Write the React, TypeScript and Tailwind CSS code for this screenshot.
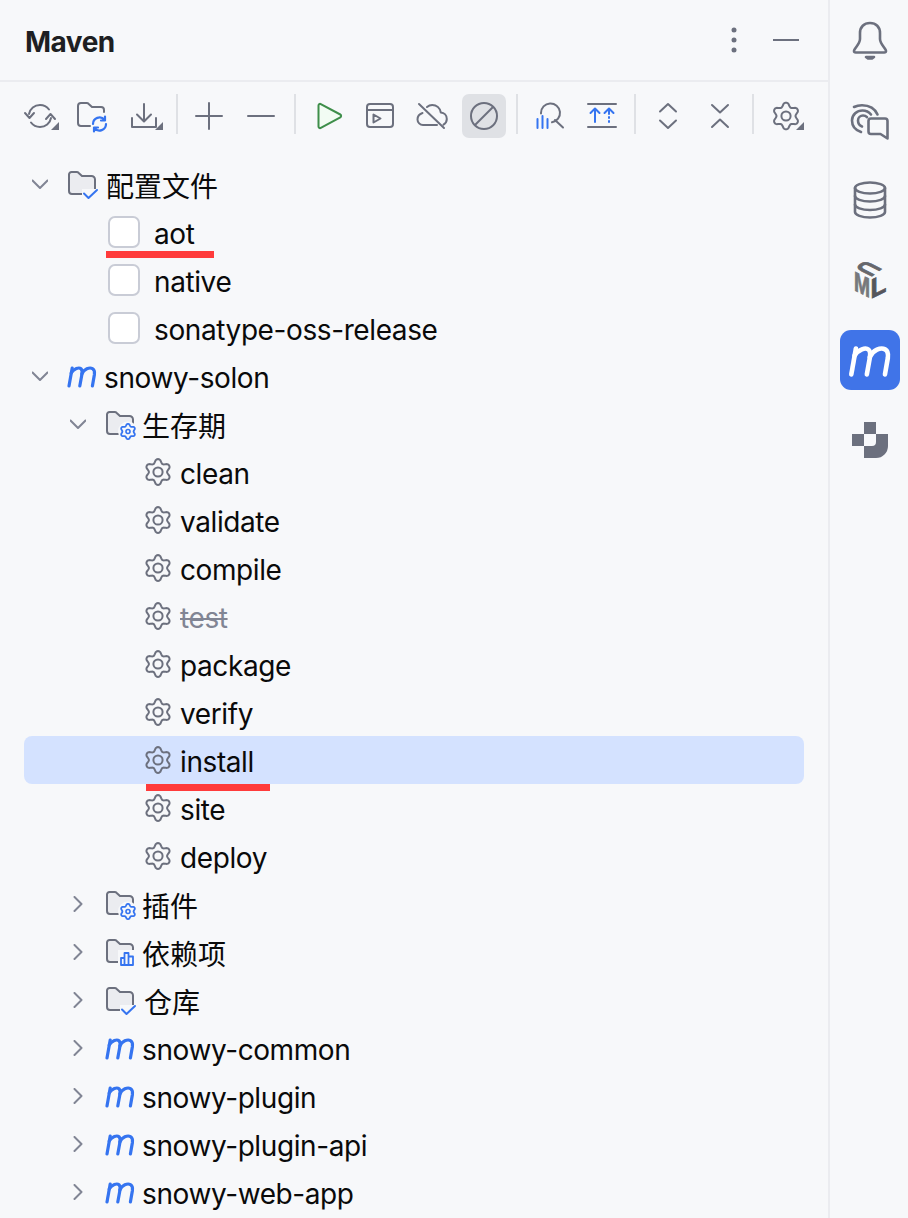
import React from "react";

const G = "#6C707E";
const B = "#3574F0";
const FONT = "font-['Inter','Noto_Sans_CJK_SC',sans-serif]";

function gearPath(cx: number, cy: number, a: number, b: number) {
  let d = "";
  for (let i = 0; i < 96; i++) {
    const t = (i / 96) * Math.PI * 2;
    const c = Math.cos(6 * t);
    const r = a + b * (c > 0 ? Math.pow(c, 0.7) : -Math.pow(-c, 0.9));
    const x = cx + r * Math.sin(t);
    const y = cy - r * Math.cos(t);
    d += (i ? "L" : "M") + x.toFixed(2) + " " + y.toFixed(2);
  }
  return d + "Z";
}

function S({ children, size = 32, vb }: { children: React.ReactNode; size?: number; vb?: string }) {
  return (
    <svg width={size} height={size} viewBox={vb ?? `0 0 ${size} ${size}`} fill="none" stroke={G} strokeWidth={2} strokeLinecap="round" strokeLinejoin="round" className="block shrink-0 overflow-visible">
      {children}
    </svg>
  );
}

const FOLDER = "M5.5 3h5.2c.8 0 1.5.3 2 .9L16 7h9.5a3.5 3.5 0 0 1 3.5 3.5V22a3 3 0 0 1-3 3H6a3 3 0 0 1-3-3V5.5A2.5 2.5 0 0 1 5.5 3z";

function Folder({ badge }: { badge: "check" | "gear" | "bars" }) {
  return (
    <S>
      <g transform="translate(0 1)">
        <path d={FOLDER} fill="#EBECF0" />
        {badge === "check" && (
          <>
            <path d="M16 20h16v10H16z" fill="#F7F8FA" stroke="none" />
            <path d="M18 24.500l4.500 4.500 8.500-8" stroke={B} strokeWidth={2} />
          </>
        )}
        {badge === "gear" && (
          <>
            <circle cx="24" cy="22.500" r="10" fill="#F7F8FA" stroke="none" />
            <path d={gearPath(24, 22.5, 6.6, 1)} stroke={B} strokeWidth={1.8} />
            <circle cx="24" cy="22.500" r="2" stroke={B} strokeWidth={1.6} />
          </>
        )}
        {badge === "bars" && (
          <>
            <path d="M14 13h18v17H14z" fill="#F7F8FA" stroke="none" />
            <path d="M17 21h3.500v7H17zM20.500 16h4v12h-4zM24.500 19.500H29V28h-4.500z" stroke={B} strokeWidth={1.8} />
          </>
        )}
      </g>
    </S>
  );
}

const MPATH = ["M3 26L6.200 8", "M5.200 13C8 8.500 13 7 15 8.800c1.500 1.400 1.200 3.800.9 5.600L13.800 26", "M15.800 14C18 9 23.500 7 26.500 8.600c2.400 1.300 2.200 4 1.900 6L26.400 26"];

function MLogo({ color = B, size = 32 }: { color?: string; size?: number }) {
  return (
    <svg width={size} height={size} viewBox="0 0 32 32" fill="none" stroke={color} strokeWidth={3.2} strokeLinecap="round" strokeLinejoin="round" className="block shrink-0">
      {MPATH.map((d) => (
        <path key={d} d={d} />
      ))}
    </svg>
  );
}

function LeafGear() {
  return (
    <S>
      <path d={gearPath(16, 16, 11, 1.9)} />
      <circle cx="16" cy="16" r="4.600" />
    </S>
  );
}

const Chev = ({ open }: { open: boolean }) => (
  <svg width="16" height="16" viewBox="0 0 16 16" fill="none" stroke="#818594" strokeWidth={2} strokeLinecap="round" strokeLinejoin="round" className="block shrink-0">
    {open ? <path d="M0.500 4.500L8 12l7.500-7.500" /> : <path d="M4.500 1L11.500 8l-7 7" />}
  </svg>
);

function Tool({ children, active }: { children: React.ReactNode; active?: boolean }) {
  return (
    <div className="w-[52px] h-11 flex items-center justify-center shrink-0">
      <div className={`w-11 h-11 rounded-[7px] flex items-center justify-center ${active ? "bg-[#DFE1E5]" : ""}`}>{children}</div>
    </div>
  );
}

function Sep({ w }: { w: string }) {
  return (
    <div className={`${w} h-10 flex justify-center shrink-0`}>
      <div className="w-0.5 h-10 bg-[#DFE1E5]" />
    </div>
  );
}

function Toolbar() {
  return (
    <div className="h-[68px] pt-3 pl-[14px] flex items-start">
      <Tool>
        <S>
          <path d="M5 14C6 8.500 10.500 5 16 5c4 0 7 1.800 9 4.500" />
          <path d="M27 18c-1 5.500-5.500 9-11 9-4 0-7-1.800-9-4.500" />
          <path d="M1 13l4.500 5 4.500-5M22 19l4.500-5 4.500 5" />
          <path d="M35 22v8h-8z" fill={G} stroke="none" />
        </S>
      </Tool>
      <Tool>
        <S>
          <path d="M14 26H5a3 3 0 0 1-3-3V6a3 3 0 0 1 3-3h5.700c.8 0 1.500.3 2 .9L16 7h9a3 3 0 0 1 3 3v2" />
          <path d="M17 24a6.500 6.500 0 0 1 11.500-4.200M29 16.500v4h-4M30 24a6.500 6.500 0 0 1-11.500 4.200M18 31.500v-4h4" stroke={B} strokeWidth={2.2} />
        </S>
      </Tool>
      <Tool>
        <S>
          <path d="M16 4v17M9 14.500l7 7 7-7M4 18v9h24v-9" />
          <path d="M35 22v8h-8z" fill={G} stroke="none" />
        </S>
      </Tool>
      <Sep w="w-[13px]" />
      <Tool>
        <S>
          <path d="M16 3v26M3 16h26" />
        </S>
      </Tool>
      <Tool>
        <S>
          <path d="M3 16h26" />
        </S>
      </Tool>
      <Sep w="w-[15px]" />
      <Tool>
        <S>
          <path d="M6.500 5.500c0-1.200 1.200-2 2.300-1.400l19.500 10.400c1.100.6 1.100 2.200 0 2.800L8.800 27.900c-1.100.6-2.300-.2-2.300-1.400z" stroke="#3E8E4A" fill="#F2FCF3" />
        </S>
      </Tool>
      <Tool>
        <S>
          <rect x="3" y="4" width="26" height="23" rx="3" />
          <path d="M3 10h26M9.500 14.500v8l7-4z" />
        </S>
      </Tool>
      <Tool>
        <S>
          <path d="M6.500 13C3.500 14 1.500 16.500 1.500 19.500c0 3 2.500 5.500 5.500 5.500H21" />
          <path d="M11 7c1.400-1.200 3.200-2 5.200-2 4.300 0 7.800 3 8.600 7.500 3.500.3 6 3 6 6.500 0 2.500-1.300 4.500-3.300 5.700" />
          <path d="M3 4l25 24" />
        </S>
      </Tool>
      <Tool active>
        <S>
          <circle cx="16" cy="16" r="13" />
          <path d="M7 25L25 7" />
        </S>
      </Tool>
      <Sep w="w-[14px]" />
      <Tool>
        <S>
          <path d="M7 13.500V13a9.500 9.500 0 1 1 11 9.300" />
          <path d="M21 20l8 7.500" />
          <path d="M3.500 19v9M8.500 16v12M13.500 19v9" stroke={B} />
        </S>
      </Tool>
      <Tool>
        <S>
          <path d="M2 4h28M2 27h28" />
          <path d="M9 22V9M4.500 13L9 8.500l4.500 4.500M18.500 13l4.500-4.500 4.500 4.500" stroke={B} />
          <path d="M23 10v4M23 17v1M23 21v1" stroke={B} />
        </S>
      </Tool>
      <Sep w="w-[14px]" />
      <Tool>
        <S>
          <path d="M8 11.500L16 4l8 7.500M8 20.500L16 28l8-7.500" />
        </S>
      </Tool>
      <Tool>
        <S>
          <path d="M8 5l8 7.500L24 5M8 27l8-7.500L24 27" />
        </S>
      </Tool>
      <Sep w="w-[14px]" />
      <Tool>
        <S>
          <path d={gearPath(16, 16, 11.4, 1.9)} />
          <circle cx="16" cy="16" r="4.600" />
          <path d="M34 22v8h-8z" fill={G} stroke="none" />
        </S>
      </Tool>
    </div>
  );
}

type RowProps = {
  pad: string;
  chev?: "open" | "closed";
  icon: React.ReactNode;
  label: string;
  gap: string;
  cjk?: boolean;
  selected?: boolean;
  muted?: boolean;
  mark?: string;
};

function Row({ pad, chev, icon, label, gap, cjk, selected, muted, mark }: RowProps) {
  return (
    <div className={`relative h-12 w-[780px] rounded-lg flex items-center ${pad} ${selected ? "bg-[#D4E2FF]" : ""}`}>
      {chev && (
        <div className="mr-[18px]">
          <Chev open={chev === "open"} />
        </div>
      )}
      {icon}
      <span
        className={`${gap} text-[28px] leading-[48px] whitespace-nowrap ${cjk ? "translate-y-[3px]" : "translate-y-[2px] tracking-[-0.4px]"} ${
          muted ? "text-[#818594] line-through" : "text-[#0a0a0a]"
        }`}
      >
        {label}
      </span>
      {mark && <div className={`absolute h-[7px] bg-[#FF3B3B] ${mark}`} />}
    </div>
  );
}

const Check = () => <div className="w-8 h-8 rounded-[7px] border-2 border-[#C9CCD6] bg-white shrink-0" />;

function Tree() {
  const gears = ["clean", "validate", "compile", "test", "package", "verify", "install", "site", "deploy"];
  const mods = ["snowy-common", "snowy-plugin", "snowy-plugin-api", "snowy-web-app"];
  return (
    <div className="pl-6">
      <Row pad="pl-[8px]" chev="open" icon={<Folder badge="check" />} label="配置文件" gap="ml-2" cjk />
      <Row pad="pl-[84px]" icon={<Check />} label="aot" gap="ml-[14px]" mark="left-[82px] w-[108px] top-[43px]" />
      <Row pad="pl-[84px]" icon={<Check />} label="native" gap="ml-[14px]" />
      <Row pad="pl-[84px]" icon={<Check />} label="sonatype-oss-release" gap="ml-[14px]" />
      <Row pad="pl-[8px]" chev="open" icon={<MLogo />} label="snowy-solon" gap="ml-[6px]" />
      <Row pad="pl-[46px]" chev="open" icon={<Folder badge="gear" />} label="生存期" gap="ml-[6px]" cjk />
      {gears.map((g) => (
        <Row
          key={g}
          pad="pl-[118px]"
          icon={<LeafGear />}
          label={g}
          gap="ml-[6px]"
          muted={g === "test"}
          selected={g === "install"}
          mark={g === "install" ? "left-[122px] w-[124px] top-[48px]" : undefined}
        />
      ))}
      <Row pad="pl-[46px]" chev="closed" icon={<Folder badge="gear" />} label="插件" gap="ml-[6px]" cjk />
      <Row pad="pl-[46px]" chev="closed" icon={<Folder badge="bars" />} label="依赖项" gap="ml-[6px]" cjk />
      <Row pad="pl-[46px]" chev="closed" icon={<Folder badge="check" />} label="仓库" gap="ml-[8px]" cjk />
      {mods.map((m) => (
        <Row key={m} pad="pl-[46px]" chev="closed" icon={<MLogo />} label={m} gap="ml-[6px]" />
      ))}
    </div>
  );
}

function Rail() {
  const slot = "h-20 flex items-center justify-center";
  return (
    <div className="w-[78px] shrink-0 flex flex-col pl-0.5">
      <div className={slot}>
        <svg width="40" height="40" viewBox="0 0 40 40" fill="none" stroke={G} strokeWidth={2.6} strokeLinecap="round" strokeLinejoin="round">
          <path d="M4 31c0-1 .6-1.600 1.200-2.500 2-2.800 4.800-6 4.800-9.500V13C10 7 14 3 20 3s10 4 10 10v6c0 3.500 2.800 6.700 4.800 9.500.6.900 1.200 1.500 1.200 2.500 0 1-.8 1.500-1.800 1.500H5.800C4.800 32.500 4 32 4 31z" />
          <path d="M16 37h8l-2 1.500h-4z" fill={G} />
        </svg>
      </div>
      <div className={slot}>
        <svg width="40" height="40" viewBox="0 0 40 40" fill="none" stroke={G} strokeWidth={2.6} strokeLinecap="round" strokeLinejoin="round" className="translate-y-[2px]">
          <path d="M4 5c2-1 5-1.800 8-1.800 7 0 13 3.500 15.500 9.300" />
          <path d="M11 30C5 28 2 23.500 2 18.500 2 12.500 7 8.500 12.500 8.500c3.500 0 6.500 1.500 8.500 4" />
          <path d="M12 24.500C9.500 23.500 8 21 8 18.500c0-3 2.500-5 5-5 1.500 0 3 .6 4 1.700" />
          <path d="M21 16.500h14a2.500 2.500 0 0 1 2.500 2.500v17.500l-7-4.500H21a2.500 2.500 0 0 1-2.500-2.500V19a2.500 2.500 0 0 1 2.500-2.500z" />
        </svg>
      </div>
      <div className={slot}>
        <svg width="40" height="40" viewBox="0 0 40 40" fill="none" stroke={G} strokeWidth={2.6} strokeLinecap="round" strokeLinejoin="round">
          <ellipse cx="20" cy="8" rx="15" ry="5.500" />
          <path d="M5 8v24c0 3 6.700 5.500 15 5.500S35 35 35 32V8" />
          <path d="M5 16c0 3 6.700 5.500 15 5.500S35 19 35 16M5 24.500c0 3 6.700 5.500 15 5.500s15-2.500 15-5.500" />
        </svg>
      </div>
      <div className={slot}>
        <svg width="40" height="40" viewBox="0 0 40 40" className="overflow-visible">
          <text transform="matrix(0.74 0.37 0 1.05 4 30)" fontFamily="Liberation Sans" fontWeight="700" fontSize="26" fill="#77787c" stroke="#77787c" strokeWidth="0.8">M</text>
          <text transform="matrix(1 -0.5 0 1.05 20.500 39)" fontFamily="Liberation Sans" fontWeight="700" fontSize="26" fill="#55565c" stroke="#55565c" strokeWidth="0.8">L</text>
          <text transform="matrix(-0.62 0.47 -0.92 -0.46 16 0)" fontFamily="Liberation Sans" fontWeight="700" fontSize="26" fill="#66676c" stroke="#66676c" strokeWidth="1">U</text>
        </svg>
      </div>
      <div className={slot}>
        <div className="w-[60px] h-[60px] rounded-[11px] bg-[#4074E8] flex items-center justify-center">
          <MLogo color="#fff" size={46} />
        </div>
      </div>
      <div className={slot}>
        <svg width="40" height="40" viewBox="0 0 40 40" fill={G}>
          <path d="M14 2h12v12H14zM2 14h12v12H2z" />
          <path d="M26 14h12v12a12 12 0 0 1-12 12H14V26h8a4 4 0 0 0 4-4z" />
        </svg>
      </div>
    </div>
  );
}

export default function App() {
  return (
    <div className={`w-[908px] h-[1218px] overflow-hidden flex bg-[#F7F8FA] ${FONT}`}>
      <div className="w-[830px] shrink-0 border-r-2 border-[#EBECF0] flex flex-col">
        <div className="h-[82px] shrink-0 border-b-2 border-[#EBECF0] flex items-center pl-[25px] pr-[29px]">
          <span className="text-[28px] font-bold tracking-[-0.5px] text-[#1E1F22] flex-1 mt-[3px]">Maven</span>
          <svg width="6" height="26" viewBox="0 0 6 26" fill={G} className="mr-[36px]">
            <circle cx="3" cy="3" r="2.500" />
            <circle cx="3" cy="13" r="2.500" />
            <circle cx="3" cy="23" r="2.500" />
          </svg>
          <div className="w-[26px] h-0.5 bg-[#6C707E]" />
        </div>
        <Toolbar />
        <div className="h-2.5 shrink-0" />
        <Tree />
      </div>
      <Rail />
    </div>
  );
}
